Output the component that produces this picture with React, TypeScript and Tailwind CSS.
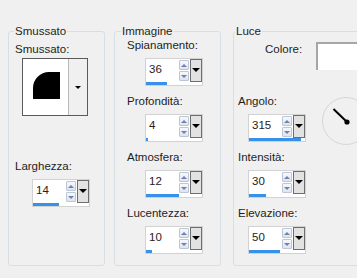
import React from "react";

// small triangle arrows drawn with css borders
function ArrowBtn({ up }: { up?: boolean }) {
  return (
    <div className="flex h-[10px] w-[10px] items-center justify-center rounded-[1px] border border-[#bcc6d6] bg-gradient-to-b from-[#f7f8fb] to-[#dfe4ec]">
      {up ? (
        <div className="h-0 w-0 border-x-[3px] border-b-[3px] border-x-transparent border-b-[#6c82b2]" />
      ) : (
        <div className="h-0 w-0 border-x-[3px] border-t-[3px] border-x-transparent border-t-[#6c82b2]" />
      )}
    </div>
  );
}

function Spin({ value, fill }: { value: string; fill: number }) {
  return (
    <div className="w-[58px] border border-[#d2d2d2] bg-white">
      <div className="flex h-[23px]">
        <div className="flex-1 pl-[3px] pt-[2px] text-[#2a2016]">{value}</div>
        <div className="flex w-[10px] flex-col gap-[1px] pt-[1px]">
          <ArrowBtn up />
          <ArrowBtn />
        </div>
        <div className="ml-[1px] flex w-[12px] justify-center border border-[#6e6e6e] bg-[#e2e2e2] pt-[8px]">
          <div className="h-0 w-0 border-x-[4px] border-t-[4px] border-x-transparent border-t-black" />
        </div>
      </div>
      <div className="h-[3px] bg-white">
        <div className="h-full bg-[#3592e8]" style={{ width: fill }} />
      </div>
    </div>
  );
}

function Group({
  title,
  titleLeft,
  className,
  children,
}: {
  title: string;
  titleLeft: string;
  className: string;
  children: React.ReactNode;
}) {
  return (
    <div className={`relative h-[235px] shrink-0 rounded-[3px] border border-[#d5dfe5] ${className}`}>
      <span className={`absolute top-[-9px] bg-[#f0f0f0] px-[1px] ${titleLeft}`}>{title}</span>
      {children}
    </div>
  );
}

function Row({ label, value, fill, pad, indent }: { label: string; value: string; fill: number; pad: string; indent: string }) {
  return (
    <div className="flex flex-col">
      <div className={pad}>{label}</div>
      <div className={`mt-[5px] ${indent}`}>
        <Spin value={value} fill={fill} />
      </div>
    </div>
  );
}

export default function App() {
  return (
    <div className="h-[278px] w-[357px] overflow-hidden bg-[#f0f0f0] font-['Liberation_Sans',Arial,sans-serif] text-[11.5px] leading-[16px] text-[#1e1e1e]">
      <div className="flex pl-[8px] pt-[31px]">
        {/* Smussato */}
        <Group title="Smussato" titleLeft="left-[5px]" className="w-[97px]">
          <div className="pl-[6px] pt-[9px]">Smussato:</div>
          <div className="ml-[13px] mt-[1px] flex h-[58px] w-[66px] border border-[#5a5a5a] bg-white">
            <div className="relative w-[45px] bg-white">
              <div className="absolute left-[10px] top-[13px] h-[27px] w-[27px] rounded-tl-[16px] bg-black" />
            </div>
            <div className="flex flex-1 items-center justify-center border-l border-[#b8b8b8] bg-[#f0f0f0]">
              <div className="h-0 w-0 border-x-[3px] border-t-[3px] border-x-transparent border-t-black" />
            </div>
          </div>
          <div className="mt-[42px] pl-[6px]">Larghezza:</div>
          <div className="ml-[23px] mt-[5px]">
            <Spin value="14" fill={26} />
          </div>
        </Group>

        {/* Immagine */}
        <Group title="Immagine" titleLeft="left-[6px]" className="ml-[9px] w-[107px]">
          <div className="flex flex-col gap-[7px] pt-[5px]">
            <Row label="Spianamento:" value="36" fill={21} pad="pl-[12px]" indent="ml-[30px]" />
            <Row label="Profondità:" value="4" fill={2} pad="pl-[12px]" indent="ml-[30px]" />
            <Row label="Atmosfera:" value="12" fill={33} pad="pl-[12px]" indent="ml-[30px]" />
            <Row label="Lucentezza:" value="10" fill={6} pad="pl-[12px]" indent="ml-[30px]" />
          </div>
        </Group>

        {/* Luce */}
        <Group title="Luce" titleLeft="left-[1px]" className="ml-[12px] w-[140px]">
          <div className="mt-[9px] flex items-start">
            <div className="w-[86px] pl-[31px]">Colore:</div>
            <div className="mt-[1px] h-[28px] w-[60px] border-l-2 border-t-2 border-[#a6a6a6] bg-white" />
          </div>
          <div className="mt-[23px] flex h-[49px] items-start">
            <div className="w-[88px]">
              <Row label="Angolo:" value="315" fill={52} pad="pl-[4px]" indent="ml-[14px]" />
            </div>
            <svg className="mt-[4px] shrink-0" width="48" height="48" viewBox="0 0 48 48">
              <circle cx="24" cy="24" r="23.5" fill="none" stroke="#d6d6d6" />
              <line x1="11.5" y1="12" x2="25" y2="25" stroke="#000" strokeWidth="2" />
              <circle cx="25" cy="25" r="2.6" fill="#000" />
            </svg>
          </div>
          <div className="mt-[7px] flex flex-col gap-[7px]">
            <Row label="Intensità:" value="30" fill={17} pad="pl-[4px]" indent="ml-[14px]" />
            <Row label="Elevazione:" value="50" fill={31} pad="pl-[4px]" indent="ml-[14px]" />
          </div>
        </Group>
      </div>
    </div>
  );
}
